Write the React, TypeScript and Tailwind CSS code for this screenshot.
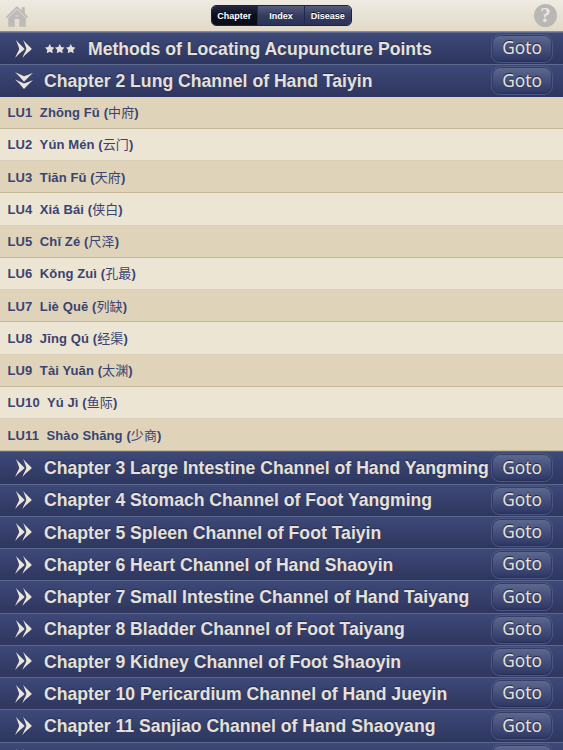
import clsx from "clsx";

interface Point {
  code: string;
  name: string;
  hanzi: string;
}

interface Chapter {
  title: string;
  starred?: boolean;
  open?: boolean;
  points?: Point[];
}

const lungPoints: Point[] = [
  { code: "LU1", name: "Zhōng Fǔ", hanzi: "中府" },
  { code: "LU2", name: "Yún Mén", hanzi: "云门" },
  { code: "LU3", name: "Tiān Fǔ", hanzi: "天府" },
  { code: "LU4", name: "Xiá Bái", hanzi: "侠白" },
  { code: "LU5", name: "Chǐ Zé", hanzi: "尺泽" },
  { code: "LU6", name: "Kǒng Zuì", hanzi: "孔最" },
  { code: "LU7", name: "Liè Quē", hanzi: "列缺" },
  { code: "LU8", name: "Jīng Qú", hanzi: "经渠" },
  { code: "LU9", name: "Tài Yuān", hanzi: "太渊" },
  { code: "LU10", name: "Yú Jì", hanzi: "鱼际" },
  { code: "LU11", name: "Shào Shāng", hanzi: "少商" },
];

const chapters: Chapter[] = [
  { title: "Methods of Locating Acupuncture Points", starred: true },
  { title: "Chapter 2 Lung Channel of Hand Taiyin", open: true, points: lungPoints },
  { title: "Chapter 3 Large Intestine Channel of Hand Yangming" },
  { title: "Chapter 4 Stomach Channel of Foot Yangming" },
  { title: "Chapter 5 Spleen Channel of Foot Taiyin" },
  { title: "Chapter 6 Heart Channel of Hand Shaoyin" },
  { title: "Chapter 7 Small Intestine Channel of Hand Taiyang" },
  { title: "Chapter 8 Bladder Channel of Foot Taiyang" },
  { title: "Chapter 9 Kidney Channel of Foot Shaoyin" },
  { title: "Chapter 10 Pericardium Channel of Hand Jueyin" },
  { title: "Chapter 11 Sanjiao Channel of Hand Shaoyang" },
];

const tabs = ["Chapter", "Index", "Disease"];

function HomeIcon() {
  return (
    <svg viewBox="0 0 22 21" className="mt-px h-[21px] w-[22px]" fill="#bdbbb8">
      <path d="M11 0 L15.6 4.4 V1.2 H18.8 V7.6 L22 10.8 L20.8 12.2 L11 2.8 L1.2 12.2 L0 10.8 Z" />
      <path d="M11 3.6 L19.8 12 V20.8 H13.3 V13 H8.7 V20.8 H2.2 V12 Z" />
      <path d="M9.3 9.2 H12.7 V10.8 H9.3 Z" fill="#cfccc5" />
    </svg>
  );
}

function Chevrons({ open }: { open?: boolean }) {
  return (
    <svg
      viewBox="0 0 18 18"
      className={clsx("h-[18px] w-[18px] shrink-0", open && "rotate-90")}
      fill="#ebe6da"
    >
      <path d="M1 0 C3.4 3.2 7 6 9.7 9 C6.4 12 3 14.5 0.2 18 C1.3 14.5 3.2 12 4.2 9 C3.6 6 2 3.2 1 0 Z" />
      <path d="M8.2 0 C10.6 3.2 14.2 6 16.9 9 C13.6 12 10.2 14.5 7.4 18 C8.5 14.5 10.4 12 11.4 9 C10.8 6 9.2 3.2 8.2 0 Z" />
    </svg>
  );
}

function Stars() {
  return (
    <div className="mr-[13px] ml-[0.5px] flex gap-px">
      {[0, 1, 2].map((i) => (
        <svg key={i} viewBox="0 0 10 10" className="h-[9.5px] w-[9.5px]" fill="#e3dfd6">
          <path d="M5 0 L6.6 3.2 L10 3.7 L7.6 6.2 L8.2 9.8 L5 8.2 L1.8 9.8 L2.4 6.2 L0 3.7 L3.4 3.2 Z" />
        </svg>
      ))}
    </div>
  );
}

function GotoButton({ label }: { label?: string }) {
  return (
    <button className="mr-[10px] ml-auto h-[29px] w-[62px] shrink-0 rounded-[9px] border border-[#4b5683] bg-linear-to-b from-[#5f6a90] via-[#454f7b] to-[#2e3764] pb-px font-['Noto_Sans',sans-serif] text-[17.3px] leading-none text-[#e8e4dc] shadow-[inset_0_-1px_1px_0_#272f56,inset_0_0_0_1px_#353e69] [text-shadow:0_-1px_1px_#1c2340]">
      {label}
    </button>
  );
}

function ChapterRow({ chapter }: { chapter?: Chapter }) {
  return (
    <div className="flex h-[32.25px] items-center border-t border-[#5d688f] bg-linear-to-b from-[#3e4979] to-[#2e365e] pl-[15px]">
      <Chevrons open={chapter?.open} />
      {chapter && (
        <div className="ml-[11px] flex items-center whitespace-nowrap">
          {chapter.starred && <Stars />}
          <span className="pt-[2px] text-[17.62px] leading-none font-bold text-[#e5e1da] [text-shadow:0_-1px_1px_#262d50]">
            {chapter.title}
          </span>
        </div>
      )}
      <GotoButton label={chapter && "Goto"} />
    </div>
  );
}

function PointRow({ point }: { point: Point }) {
  return (
    <div className="flex h-[32.25px] items-center border-b border-[#c4b899] pt-px pl-[7.5px] text-[13px] leading-none font-bold tracking-[0.11px] whitespace-pre text-[#3a4371] odd:bg-[#dfd4ba] even:border-[#d9cfb9] even:bg-[#ede5d3]">
      <span>{`${point.code}  ${point.name} (`}</span>
      <span className="font-normal">{point.hanzi}</span>
      <span>)</span>
    </div>
  );
}

export default function App() {
  return (
    <div className="h-[750px] w-[563px] overflow-hidden bg-[#2e365e] font-['Liberation_Sans','Noto_Sans_CJK_SC',sans-serif]">
      <header className="flex h-[32px] items-center justify-between border-b border-[#8d8984] bg-linear-to-b from-[#eeebe3] to-[#e2d9c8] pr-[6px] pl-[6px]">
        <HomeIcon />
        <div className="flex h-[21px] w-[141px] overflow-hidden rounded-[5px] border border-[#1f243c] text-[9px] font-bold text-white">
          {tabs.map((tab, i) => (
            <button
              key={tab}
              className={clsx(
                "flex-1 pt-px leading-none [text-shadow:0_-1px_0_#11142a]",
                i === 0
                  ? "bg-linear-to-b from-[#242842] via-[#0c0d1c] to-[#0a0b18]"
                  : "border-l border-[#23294a] bg-linear-to-b from-[#555d7d] via-[#343c60] to-[#2b3257]"
              )}
            >
              {tab}
            </button>
          ))}
        </div>
        <div className="flex h-[23px] w-[23px] items-center justify-center rounded-full bg-[#b9b7b4] font-['Liberation_Serif',serif] text-[21px] leading-none font-bold text-[#ebe7de]">
          ?
        </div>
      </header>

      {chapters.map((chapter) => (
        <section key={chapter.title}>
          <ChapterRow chapter={chapter} />
          {chapter.points && (
            <div>
              {chapter.points.map((point) => (
                <PointRow key={point.code} point={point} />
              ))}
            </div>
          )}
        </section>
      ))}
      {/* next row just peeks in at the bottom edge */}
      <ChapterRow />
    </div>
  );
}
